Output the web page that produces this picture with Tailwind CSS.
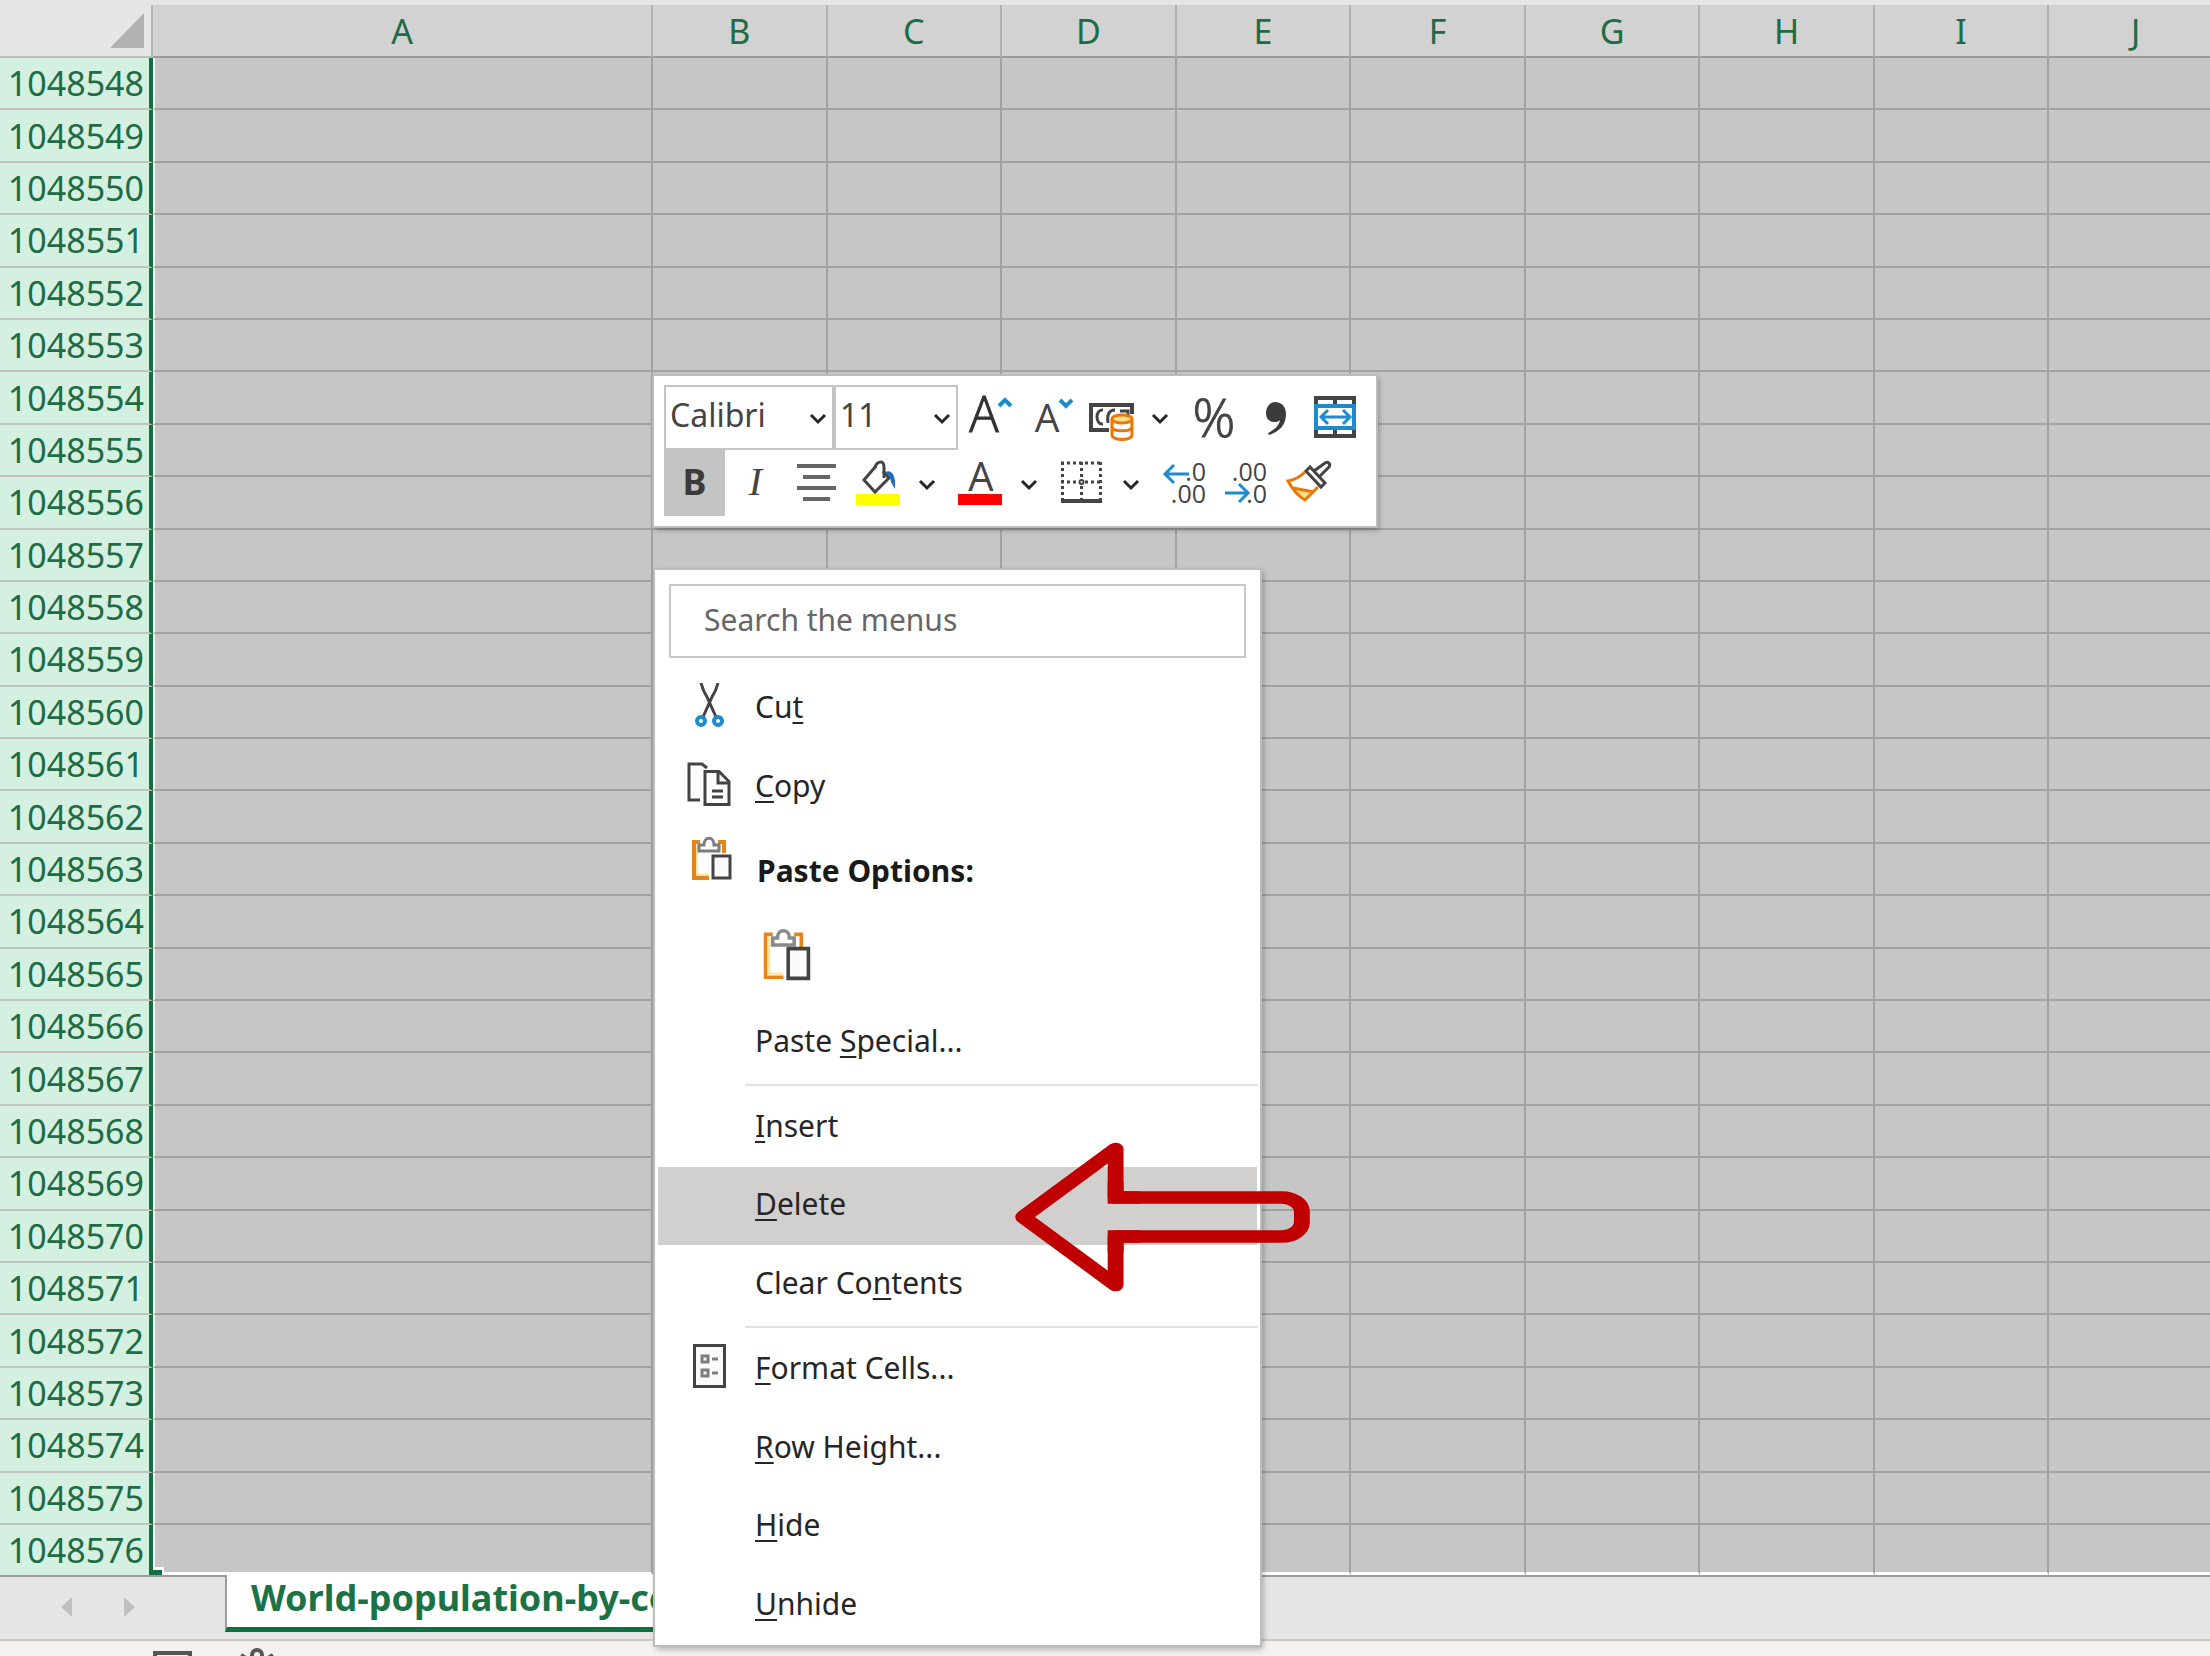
<!doctype html>
<html lang="en">
<head>
  <meta charset="utf-8">

  <meta name="viewport" content="width=device-width, initial-scale=1">

  <title>World-population-by-country</title>
  <script src="https://cdn.jsdelivr.net/npm/@tailwindcss/browser@4"></script>
</head>
<body class="relative flex h-screen flex-col overflow-hidden bg-[#e6e6e6] font-['Noto_Sans','Open_Sans',sans-serif] text-[#262626]">

  <main class="min-h-0 flex-1 pt-[5px]">
    <table class="h-full w-[calc(100%+14px)] table-fixed border-separate border-spacing-0 text-[34px] leading-10 text-[#1e6b45]">
      <colgroup>
        <col class="w-[153px]">
        <col class="w-[500px]">
        <col span="9">
      </colgroup>
      <thead>
        <tr id="columns" class="h-[53px]">
          <td class="border-r-2 border-b-2 border-r-[#b4b4b4] border-b-[#bdbdbd] bg-[#e6e6e6] pr-[7px]">
            <svg class="ml-auto" width="34" height="35" viewBox="0 0 34 35"><path d="M34 0v35H0z" fill="#b2b2b2"/></svg>
          </td>
        </tr>
      </thead>
      <tbody id="rows"></tbody>
    </table>
  </main>

  <nav class="flex h-[64px] shrink-0 items-start border-t-2 border-[#9b9b9b] bg-[#e6e6e6]">
    <div class="flex w-[225px] items-center gap-[52px] pt-5 pl-[61px]">
      <button type="button" aria-label="Previous sheet"><svg width="11" height="20" viewBox="0 0 11 20"><path d="M11 0v20L0 10z" fill="#c0c0c0"/></svg></button>
      <button type="button" aria-label="Next sheet"><svg width="11" height="20" viewBox="0 0 11 20"><path d="M0 0v20l11-10z" fill="#c0c0c0"/></svg></button>
    </div>
    <a href="#" class="-mt-[2px] h-[57px] border-b-[5px] border-l-2 border-b-[#107040] border-l-[#9b9b9b] bg-white px-6 text-[36px] leading-[46px] font-bold whitespace-nowrap text-[#1a7245]">World-population-by-country</a>
  </nav>

  <footer class="flex h-[17px] shrink-0 items-start gap-12 overflow-hidden border-t-2 border-[#c8c8c8] bg-[#f3f2f1] pt-[10px] pl-[153px]">
    <svg width="39" height="30" viewBox="0 0 39 30" fill="none" stroke="#555" stroke-width="4"><path d="M2 2h35v26H2z"/></svg>
    <svg class="overflow-visible" width="34" height="30" viewBox="0 0 34 30" fill="none" stroke="#555" stroke-width="4"><circle cx="17" cy="4" r="5"/><path d="M1 4l8 5h16l8-5"/></svg>
  </footer>

  <!-- mini toolbar -->
  <div class="absolute top-[376px] left-[654px] bg-white pt-[9px] pr-2 pb-[10px] pl-[10px] shadow-[0_0_0_2px_#bcbcbc,2px_3px_5px_1px_rgba(0,0,0,0.3)]">
    <div class="flex h-[65px]">
      <div class="relative w-[170px]">
        <select aria-label="Font" class="h-full w-full appearance-none border-2 border-[#c4c4c4] bg-white pb-[6px] pl-1 text-[32px] leading-10 text-[#444]"><option>Calibri</option></select>
        <svg class="pointer-events-none absolute top-0 right-0" width="36" height="65" viewBox="0 0 36 65" fill="none" stroke="#262626" stroke-width="3"><path d="M13 30l7 7 7-7"/></svg>
      </div>
      <div class="relative w-[124px]">
        <select aria-label="Font size" class="h-full w-full appearance-none border-2 border-[#c4c4c4] bg-white pb-[6px] pl-1 text-[32px] leading-10 text-[#444]"><option>11</option></select>
        <svg class="pointer-events-none absolute top-0 right-0" width="36" height="65" viewBox="0 0 36 65" fill="none" stroke="#262626" stroke-width="3"><path d="M13 30l7 7 7-7"/></svg>
      </div>
      <button type="button" aria-label="Increase font size">
        <svg class="overflow-visible" width="66" height="65" viewBox="0 0 66 65"><text x="26" y="47" text-anchor="middle" font-family="Open Sans" font-weight="300" font-size="49" fill="#333" stroke="#333">A</text><path d="M41 21l6-6 6 6" fill="none" stroke="#1e8bcd" stroke-width="4"/></svg>
      </button>
      <button type="button" aria-label="Decrease font size">
        <svg class="overflow-visible" width="56" height="65" viewBox="0 0 56 65"><text x="23" y="47" text-anchor="middle" font-family="Open Sans" font-size="39" fill="#444">A</text><path d="M36 15l6 6 6-6" fill="none" stroke="#1e8bcd" stroke-width="4"/></svg>
      </button>
      <button type="button" aria-label="Accounting number format">
        <svg width="64" height="65" viewBox="0 0 64 65" fill="none" stroke="#444" stroke-width="3">
          <path d="M52 29v-9H11v25h18" stroke-width="4"/>
          <path d="M23 25c-8-1-8 15 0 14M35 25c-7 0-8 6-7 13M40 26h8v4"/>
          <path d="M32 34v16c0 6 20 6 20 0V34" fill="#fff" stroke="#e87807"/>
          <path d="M32 42c0 5 20 5 20 0" stroke="#e87807"/>
          <ellipse cx="42" cy="34" rx="10" ry="4" fill="#fbe08c" stroke="#e87807"/>
        </svg>
      </button>
      <button type="button" aria-label="Accounting formats">
        <svg width="36" height="65" viewBox="0 0 36 65" fill="none" stroke="#262626" stroke-width="3"><path d="M9 30l7 7 7-7"/></svg>
      </button>
      <button type="button" aria-label="Percent style">
        <svg class="overflow-visible" width="68" height="65" viewBox="0 0 68 65"><text x="34" y="52" text-anchor="middle" font-family="Open Sans" font-weight="300" font-size="53" fill="#444" stroke="#444">%</text></svg>
      </button>
      <button type="button" aria-label="Comma style">
        <svg width="56" height="65" viewBox="0 0 56 65" fill="#3b3b3b"><path d="M27 17c7 0 11 5 11 12 0 11-7 18-17 21l-1-2c6-3 11-7 12-13-2 2-4 2-6 2-5 0-8-4-8-9 0-6 4-11 9-11z"/></svg>
      </button>
      <button type="button" aria-label="Merge and center">
        <svg width="64" height="65" viewBox="0 0 64 65" fill="none" stroke="#444" stroke-width="4">
          <path d="M12 13h38v38H12zM31 12v8M31 44v8"/>
          <path d="M12 21h38v22H12z" fill="#fff" stroke="#1e8bcd"/>
          <path d="M18 32h27M24 25l-7 7 7 7M39 25l7 7-7 7" stroke="#1e8bcd" stroke-width="3"/>
        </svg>
      </button>
    </div>
    <div class="flex h-[66px]">
      <button type="button" aria-label="Bold" class="w-[61px] bg-[#c4c4c4] pb-[3px] text-[36px] leading-[60px] font-bold text-[#3b3b3b]">B</button>
      <button type="button" aria-label="Italic" class="w-[61px] pb-[3px] font-['Liberation_Serif',serif] text-[40px] leading-[60px] text-[#444] italic">I</button>
      <button type="button" aria-label="Center">
        <svg width="61" height="66" viewBox="0 0 61 66" stroke="#666" stroke-width="4"><path d="M11 16h39M17 27h27M11 38h39M17 49h27"/></svg>
      </button>
      <button type="button" aria-label="Fill color">
        <svg width="63" height="66" viewBox="0 0 63 66" fill="none" stroke="#444" stroke-width="3">
          <path d="M29 16L17 30l11 12 14-14-6-7"/>
          <path d="M28 18c1-5 4-6 6-6 3 0 3 3 3 6v10"/>
          <path d="M38 22c7-3 11 3 10 17l-4-7-1-5z" fill="#1a6fb8" stroke="none"/>
          <path d="M9 44h44v11H9z" fill="#ff0" stroke="none"/>
        </svg>
      </button>
      <button type="button" aria-label="Fill colors">
        <svg width="36" height="66" viewBox="0 0 36 66" fill="none" stroke="#262626" stroke-width="3"><path d="M10 31l7 7 7-7"/></svg>
      </button>
      <button type="button" aria-label="Font color">
        <svg class="overflow-visible" width="66" height="66" viewBox="0 0 66 66"><text x="35" y="41" text-anchor="middle" font-family="Open Sans" font-size="40" fill="#444">A</text><path d="M12 44h44v11H12z" fill="red"/></svg>
      </button>
      <button type="button" aria-label="Font colors">
        <svg width="36" height="66" viewBox="0 0 36 66" fill="none" stroke="#262626" stroke-width="3"><path d="M10 31l7 7 7-7"/></svg>
      </button>
      <button type="button" aria-label="Bottom border">
        <svg width="66" height="66" viewBox="0 0 66 66" fill="none" stroke="#444" stroke-width="3">
          <path d="M13 13h41M14.500 12v38M52.500 12v38M33.500 12v38M13 32h41" stroke-dasharray="3 3"/>
          <circle cx="33.500" cy="32" r="2" fill="#fff" stroke-width="2"/>
          <path d="M13 51h41" stroke-width="4"/>
        </svg>
      </button>
      <button type="button" aria-label="Borders">
        <svg width="36" height="66" viewBox="0 0 36 66" fill="none" stroke="#262626" stroke-width="3"><path d="M10 31l7 7 7-7"/></svg>
      </button>
      <button type="button" aria-label="Increase decimal">
        <svg width="66" height="66" viewBox="0 0 66 66">
          <g font-family="Open Sans" font-size="25" fill="#444" text-anchor="end"><text x="56" y="31">.0</text><text x="56" y="53">.00</text></g>
          <path d="M39 24H15M24 15l-9 9 9 9" fill="none" stroke="#1e8bcd" stroke-width="3"/>
        </svg>
      </button>
      <button type="button" aria-label="Decrease decimal">
        <svg width="61" height="66" viewBox="0 0 61 66">
          <g font-family="Open Sans" font-size="25" fill="#444" text-anchor="end"><text x="51" y="31">.00</text><text x="51" y="53">.0</text></g>
          <path d="M9 43h23M23 34l9 9-9 9" fill="none" stroke="#1e8bcd" stroke-width="3"/>
        </svg>
      </button>
      <button type="button" aria-label="Format painter">
        <svg width="63" height="66" viewBox="0 0 63 66" fill="none" stroke="#e87807" stroke-width="3">
          <path d="M16 38l22 4-10 8z" fill="#fbe08c" stroke="none"/>
          <path d="M28 22c-5 5-10 8-17 9 5 9 10 15 17 19l13-13M16 38l21 4"/>
          <path d="M29 21l4-4 15 16-4 4zM37 21l11-8c3-2 6 1 4 4l-9 9" fill="#fff" stroke="#444"/>
        </svg>
      </button>
    </div>
  </div>

  <!-- context menu -->
  <div class="absolute top-[570px] left-[655px] w-[605px] bg-white pt-[14px] text-[30px] leading-10 shadow-[0_0_0_2px_#bcbcbc,2px_3px_6px_1px_rgba(0,0,0,0.3)]">
    <div class="px-[14px] pb-[11px]">
      <input type="search" aria-label="Search the menus" placeholder="Search the menus" class="block h-[74px] w-full border-2 border-[#c8c8c8] pb-1 pl-[33px] placeholder:text-[#666]">
    </div>
    <button type="button" class="flex h-[79px] w-full items-center pb-1">
      <span class="flex w-[100px] pb-1 pl-[32px]">
        <svg width="44" height="44" viewBox="0 0 44 44" fill="none" stroke="#444" stroke-width="3"><path d="M14 0q2 8 6 14l9 20M31 0q-2 8-6 14l-9 20"/><g stroke="#1e8bcd" stroke-width="4"><circle cx="14" cy="38" r="4"/><circle cx="31" cy="38" r="4"/></g></svg>
      </span>
      <span>Cu<u class="decoration-2 underline-offset-4">t</u></span>
    </button>
    <button type="button" class="flex h-[79px] w-full items-center pb-1">
      <span class="flex w-[100px] pb-1 pl-[32px]">
        <svg width="44" height="44" viewBox="0 0 44 44" fill="none" stroke="#444" stroke-width="3"><path d="M13 38H2V2h13l5 4"/><path d="M18 9.500h14l10 10v23H18zM31 10v11h11M25 29h11M25 35h11"/></svg>
      </span>
      <span><u class="decoration-2 underline-offset-4">C</u>opy</span>
    </button>
    <h2 class="flex h-[79px] items-center font-bold text-[#1a1a1a]">
      <span class="flex w-[102px] pb-[16px] pl-[36px]">
        <svg width="42" height="45" viewBox="0 0 42 45" fill="none"><path d="M18 42H3V6h6M27 6h6v11" stroke="#e6831a" stroke-width="4"/><path d="M6 9v30h12" stroke="#fbe3a0" stroke-width="2"/><path d="M8 15V9h5c0-9 10-9 10 0h5v6z" fill="#fff" stroke="#7d7d7d" stroke-width="3"/><path d="M22 20h17v22H22z" fill="#fafafa" stroke="#444" stroke-width="3"/></svg>
      </span>
      <span class="pt-[8px]">Paste Options:</span>
    </h2>
    <div class="flex h-[97px] items-center pb-[2px] pl-[107px]">
      <button type="button" aria-label="Paste">
        <svg width="50" height="54" viewBox="0 0 42 45" fill="none"><path d="M18 42H3V6h6M27 6h6v11" stroke="#e6831a" stroke-width="3"/><path d="M6 9v30h12" stroke="#fbe3a0" stroke-width="2"/><path d="M9 15V9h4c0-8 10-8 10 0h4v6z" fill="#fff" stroke="#8a8a8a" stroke-width="3"/><path d="M22 18h17v25H22z" fill="#fafafa" stroke="#444" stroke-width="3"/></svg>
      </button>
    </div>
    <button type="button" class="flex h-[79px] w-full items-center pb-1 pl-[100px]"><span>Paste <u class="decoration-2 underline-offset-4">S</u>pecial...</span></button>
    <hr class="mt-[2px] mr-[2px] mb-[2px] ml-[90px] border-t-2 border-[#e1e1e1]">
    <button type="button" class="flex h-[79px] w-full items-center pb-1 pl-[100px]"><span><u class="decoration-2 underline-offset-4">I</u>nsert</span></button>
    <div class="px-[3px]">
      <button type="button" class="flex h-[78px] w-full items-center bg-[#d2d0ce] pb-1 pl-[97px]"><span><u class="decoration-2 underline-offset-4">D</u>elete</span></button>
    </div>
    <button type="button" class="flex h-[79px] w-full items-center pb-1 pl-[100px]"><span>Clear Co<u class="decoration-2 underline-offset-4">n</u>tents</span></button>
    <hr class="mt-[2px] mr-[2px] mb-[2px] ml-[90px] border-t-2 border-[#e1e1e1]">
    <button type="button" class="flex h-[79px] w-full items-center pb-1">
      <span class="flex w-[100px] pb-1 pl-[38px]">
        <svg width="34" height="44" viewBox="0 0 34 44" fill="none" stroke="#444" stroke-width="3"><path d="M1.500 1.500h30v41h-30z" fill="#fafafa"/><path d="M9 12h6v6H9zM9 26h6v6H9zM19 15h6M19 29h6" stroke="#7d7d7d"/></svg>
      </span>
      <span><u class="decoration-2 underline-offset-4">F</u>ormat Cells...</span>
    </button>
    <button type="button" class="flex h-[79px] w-full items-center pb-1 pl-[100px]"><span><u class="decoration-2 underline-offset-4">R</u>ow Height...</span></button>
    <button type="button" class="flex h-[78px] w-full items-center pb-1 pl-[100px]"><span><u class="decoration-2 underline-offset-4">H</u>ide</span></button>
    <button type="button" class="flex h-[79px] w-full items-center pb-1 pl-[100px]"><span><u class="decoration-2 underline-offset-4">U</u>nhide</span></button>
  </div>

  <!-- arrow pointing at Delete -->
  <svg class="pointer-events-none absolute top-[1142px] left-[1015px]" width="296" height="150" viewBox="0 0 296 150" fill="none" stroke="#c00000">
    <g transform="scale(1.25 1)" stroke-width="12.700">
      <path d="M6.500 75L80.500 7v48.500H213.500a16 14 0 0 1 16 14v11a16 14 0 0 1-16 14H80.500V143z" stroke-linejoin="round"/>
      <path d="M80.500 40v15.500H100M80.500 110V94.500H100"/>
    </g>
  </svg>

  <script type="module">
    const columns = document.querySelector('#columns');
    const rows = document.querySelector('#rows');
    const letters = 'ABCDEFGHIJ'.split('');
    const first = 1048548;
    const last = 1048576;

    const cell = (tag, className, text) => {
      const element = document.createElement(tag);
      element.className = className;
      element.textContent = text;
      return element;
    };

    letters.forEach((letter) => {
      columns.appendChild(cell('th', 'border-r-2 border-b-2 border-r-[#b0b0b0] border-b-[#9b9b9b] bg-[#d2d2d2] p-0 font-normal', letter));
    });

    for (let n = first; n <= last; n++) {
      const row = document.createElement('tr');
      const end = n === last;
      row.appendChild(cell('th', end
        ? 'border-r-[4px] border-r-[#107040] bg-[#d3f0e0] p-0 pr-[5px] text-right font-normal'
        : 'border-r-[4px] border-b-2 border-r-[#107040] border-b-[#c3c3c3] bg-[#d3f0e0] p-0 pr-[5px] text-right font-normal', n));
      letters.forEach((letter, i) => {
        const td = cell('td', end
          ? 'border-r-2 border-b-[3px] border-r-[#a2a2a2] border-b-white bg-[#c6c6c6] p-0'
          : 'border-r-2 border-b-2 border-[#a2a2a2] bg-[#c6c6c6] p-0', '');
        if (i === 0) {
          td.classList.add('border-l-2', 'border-l-white');
        }
        // fill handle in the corner of the selection
        if (i === 0 && end) {
          td.classList.add('relative');
          td.appendChild(cell('span', 'absolute -bottom-[3px] -left-[2px] h-[8px] w-[11px] border-t-[3px] border-r-2 border-white bg-[#107040]', ''));
        }
        row.appendChild(td);
      });
      rows.appendChild(row);
    }
  </script>

</body>
</html>
